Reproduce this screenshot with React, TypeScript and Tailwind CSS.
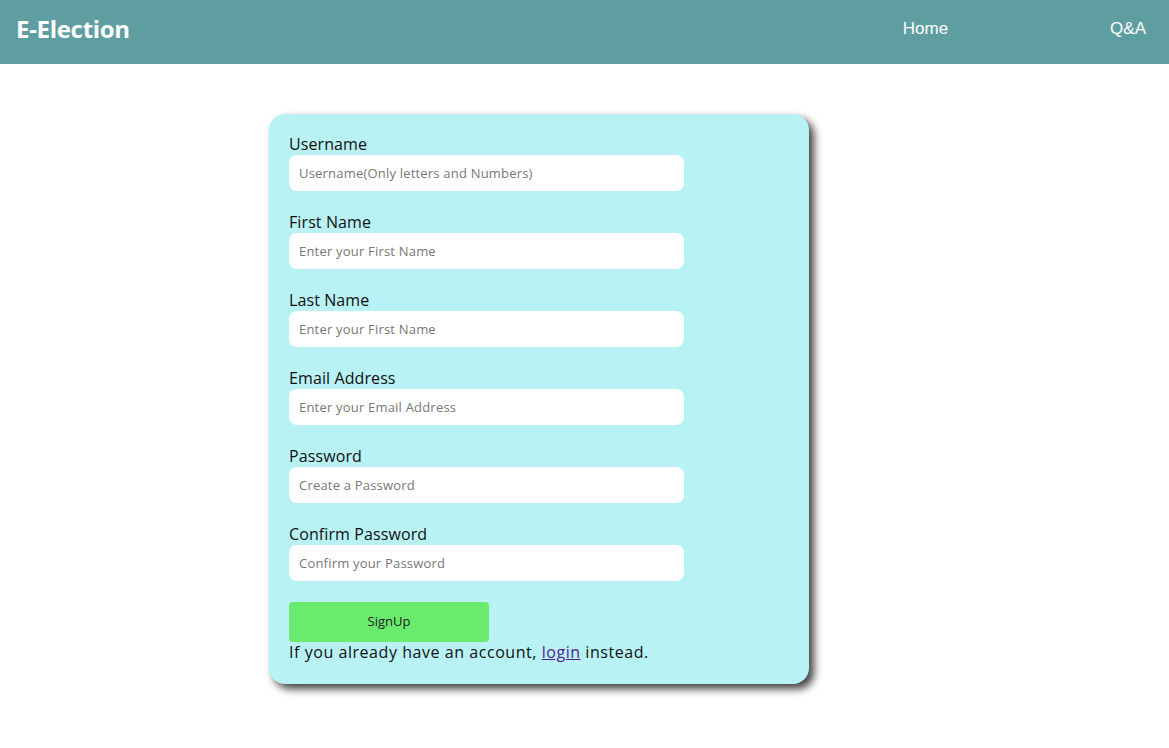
import React from "react";

const fields = [
  { label: "Username", ph: "Username(Only letters and Numbers)" },
  { label: "First Name", ph: "Enter your First Name" },
  { label: "Last Name", ph: "Enter your First Name" },
  { label: "Email Address", ph: "Enter your Email Address" },
  { label: "Password", ph: "Create a Password" },
  { label: "Confirm Password", ph: "Confirm your Password" },
];

export default function App() {
  return (
    <div className="min-h-[748px] bg-white" style={{ fontFamily: '"Liberation Sans", Arial, sans-serif' }}>
      <header className="h-16 bg-[#5f9ea0] flex items-center justify-between pl-4 pr-[23px] pb-[6px]">
        <div className="text-white font-bold text-[24px] tracking-[-0.3px]" style={{ fontFamily: '"Open Sans", sans-serif' }}>E-Election</div>
        <nav className="flex items-center gap-[162px] text-white text-[17px]">
          <span>Home</span>
          <span>Q&amp;A</span>
        </nav>
      </header>
      <main className="pt-[50px] pl-[269px]">
        <div className="w-[540px] h-[570px] rounded-[16px] bg-[#b8f2f5] shadow-[5px_5px_8px_rgba(0,0,0,0.75)] px-5 pt-[21px]" style={{ fontFamily: '"Open Sans", sans-serif' }}>
          <div className="flex flex-col gap-[22px]">
            {fields.map((f) => (
              <div key={f.label} className="flex flex-col">
                <label className="text-[16px] leading-[18px] text-[#111] mb-[2px] tracking-[0.1px]">{f.label}</label>
                <input
                  placeholder={f.ph}
                  className="w-[395px] h-9 rounded-[8px] bg-white px-[10px] text-[13px] tracking-[0.2px] placeholder:text-[#777] outline-none"
                />
              </div>
            ))}
          </div>
          <button className="mt-[21px] w-[200px] h-10 rounded-[4px] bg-[#6aeb6e] text-[13px] text-[#222]">SignUp</button>
          <p className="text-[16px] leading-[20px] text-[#111] tracking-[0.55px]">
            If you already have an account, <a className="underline text-[#551a8b]">login</a> instead.
          </p>
        </div>
      </main>
    </div>
  );
}
